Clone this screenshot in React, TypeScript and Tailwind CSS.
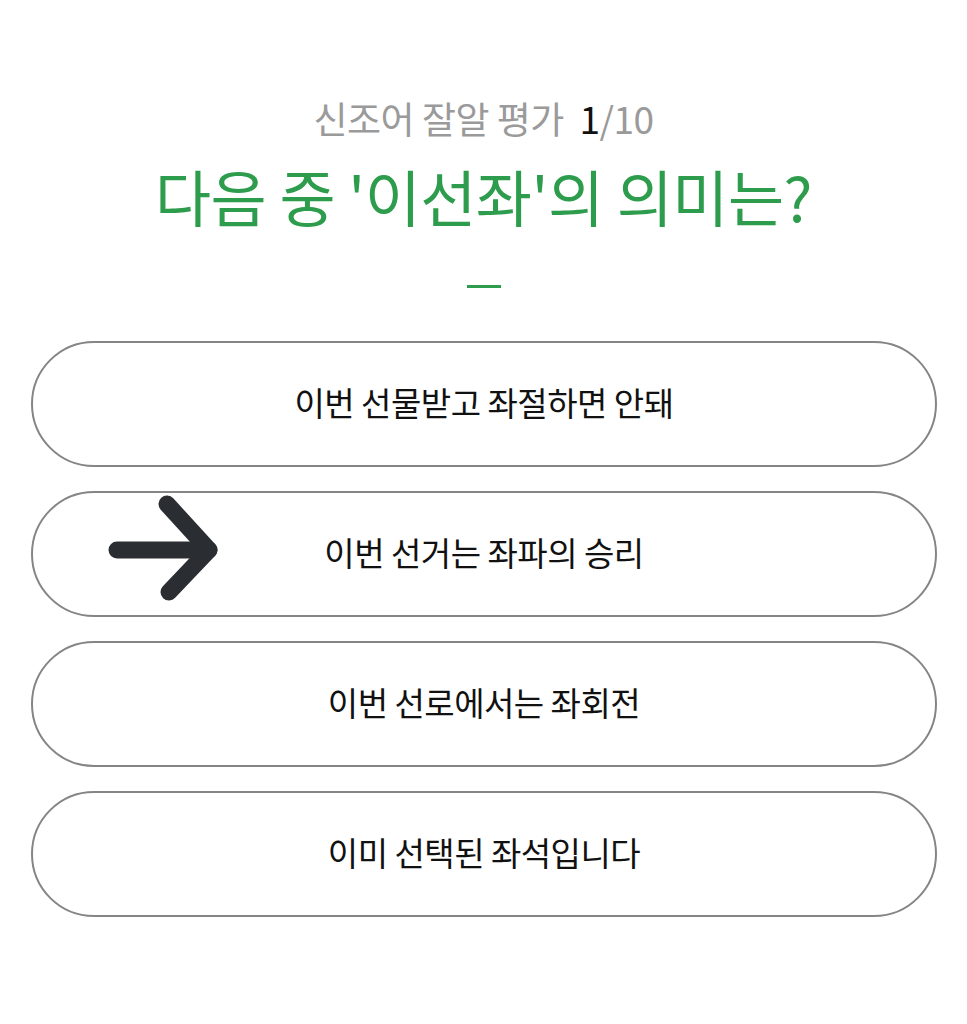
import React from "react";

const options = [
  "이번 선물받고 좌절하면 안돼",
  "이번 선거는 좌파의 승리",
  "이번 선로에서는 좌회전",
  "이미 선택된 좌석입니다",
];

function Arrow() {
  return (
    <svg width="120" height="112" viewBox="0 0 120 112" className="absolute left-[70px] top-[-1px]">
      <g fill="none" stroke="#2a2e32" strokeWidth="17" strokeLinecap="round" strokeLinejoin="round">
        <path d="M14 58 H106" />
        <path d="M64 12 L106 58 L66 100" />
      </g>
    </svg>
  );
}

export default function App() {
  return (
    <div
      className="w-[967px] h-[1024px] bg-white flex flex-col items-center"
      style={{ fontFamily: '"Noto Sans CJK KR", "Noto Sans", sans-serif' }}
    >
      <div className="mt-[92px] text-[37px] leading-[52px] text-[#9a9a9a] tracking-[-0.5px]">
        신조어 잘알 평가&nbsp;&nbsp;<span className="text-[#111]">1</span>/10
      </div>
      <div className="mt-[10px] text-[61px] leading-[84px] text-[#2d9c4c] tracking-[-0.5px]">
        다음 중 '이선좌'의 의미는?
      </div>
      <div className="mt-[47px] w-[34px] h-[3px] bg-[#2d9c4c]" />
      <div className="mt-[53px] w-[906px] ml-[1px] flex flex-col gap-[24px]">
        {options.map((o, i) => (
          <div
            key={i}
            className="relative h-[126px] rounded-full border-2 border-[#858585] bg-white flex items-center justify-center text-[33px] text-[#111] tracking-[-0.5px]"
          >
            {i === 1 && <Arrow />}
            <span className="-mt-[2px]">{o}</span>
          </div>
        ))}
      </div>
    </div>
  );
}
